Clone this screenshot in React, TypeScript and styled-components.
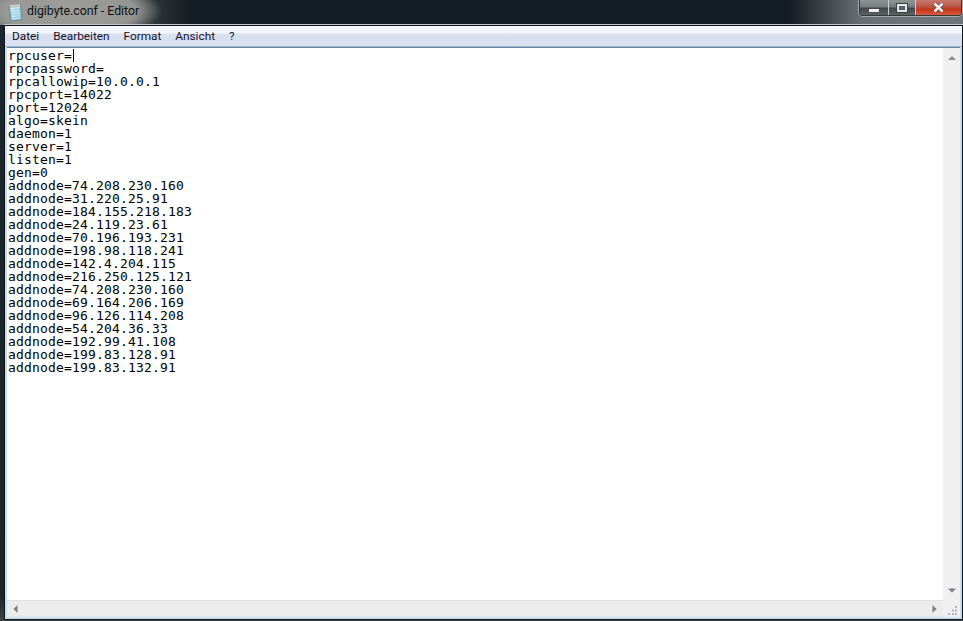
import React from "react";
import styled, { createGlobalStyle } from "styled-components";

const Global = createGlobalStyle`
  html, body { margin: 0; padding: 0; width: 963px; height: 621px; overflow: hidden; background: #1b252b; }
  #root { width: 963px; height: 621px; }
`;

const Frame = styled.div`
  width: 963px;
  height: 621px;
  display: flex;
  flex-direction: column;
  background: linear-gradient(180deg, #1b252b 0, #1c262c 96%, #3c4347 100%);
`;

const TitleBar = styled.div`
  height: 25px;
  flex: none;
  display: flex;
  align-items: flex-start;
  padding: 0 1px 0 8px;
  background:
    radial-gradient(ellipse 92px 30px at 70px 11px, rgba(160,160,156,.95) 0, rgba(156,156,152,.9) 72%, rgba(140,140,140,0) 100%),
    linear-gradient(90deg, rgba(130,134,136,0) 0, rgba(130,134,136,0) 790px, rgba(116,122,124,.9) 862px, #70767a 963px),
    linear-gradient(90deg, #6d7577 0, #667072 100px, #2c353a 155px, #151d24 190px, #141c23 963px);
`;

const DocIcon = styled.svg`
  width: 15px;
  height: 18px;
  margin: 4px 0 0 0;
  flex: none;
`;

const Title = styled.div`
  margin: 3px 0 0 4px;
  font: 12.3px/17px Roboto, "Noto Sans", sans-serif;
  color: #0c1216;
`;

const Controls = styled.div`
  margin-left: auto;
  width: 103px;
  height: 16px;
  display: flex;
  box-sizing: border-box;
  border: 1px solid #34393c;
  border-top: 0;
  border-radius: 0 0 4px 4px;
  overflow: hidden;
  box-shadow: 0 0 0 1px rgba(235,240,242,.45);
`;

const ControlButton = styled.div<{ $w: number; $close?: boolean }>`
  width: ${(p) => p.$w}px;
  flex: none;
  box-sizing: border-box;
  display: flex;
  align-items: center;
  justify-content: center;
  border-right: ${(p) => (p.$close ? "0" : "1px solid #c9cdd0")};
  background: ${(p) =>
    p.$close
      ? "linear-gradient(180deg, #c9786c 0, #b8574a 42%, #c4341a 62%, #d65a3c 100%)"
      : "linear-gradient(180deg, #8f9395 0, #777c7e 45%, #43474a 55%, #5e6366 100%)"};
`;

const MinGlyph = styled.div`
  width: 10px;
  height: 3px;
  margin-top: 6px;
  background: #f1f3f3;
  box-shadow: 0 0 1px #30363a;
`;

const MaxGlyph = styled.div`
  width: 6px;
  height: 4px;
  border: 2px solid #e4e7e9;
  background: #59606a;
  outline: 1px solid #3a4044;
`;

const CloseGlyph = styled.svg`
  width: 13px;
  height: 11px;
`;

const Body = styled.div`
  flex: 1;
  min-height: 0;
  display: flex;
  padding: 0 0 1px 4px;
`;

const Window = styled.div`
  flex: 1;
  min-width: 0;
  display: flex;
  flex-direction: column;
  border: 1px solid #0e161c;
  box-shadow: 0 -1px 0 #c4c8ca;
  background: #c8deee;
  padding: 0 2px 2px;
`;

const MenuBar = styled.div`
  height: 21px;
  flex: none;
  box-sizing: border-box;
  display: flex;
  align-items: center;
  margin: 0 -2px;
  background: linear-gradient(180deg, #f6f8fd 0, #f2f4fb 36%, #d9e0f0 40%, #d9dff0 100%);
  border-bottom: 1px solid #a8b6c7;
`;

const MenuItem = styled.div`
  padding: 0 7px;
  font: 11.8px/18px Roboto, "Noto Sans", sans-serif;
  color: #14102a;
`;

const Editor = styled.div`
  flex: 1;
  min-height: 0;
  display: grid;
  grid-template-columns: 1fr 17px;
  grid-template-rows: 1fr 17px;
  border-top: 1px solid #5d8aa8;
  background: #fff;
`;

const TextArea = styled.div`
  padding: 1px 0 0 1px;
  overflow: hidden;
`;

const Line = styled.div`
  font-family: "DejaVu Sans Mono", "Liberation Mono", monospace;
  font-size: 13px;
  letter-spacing: 0.17px;
  line-height: 13px;
  height: 13px;
  white-space: pre;
  color: #000;
`;

const Caret = styled.span`
  display: inline-block;
  width: 1px;
  height: 13px;
  margin-left: 1px;
  vertical-align: top;
  background: #000;
`;

const VScroll = styled.div`
  background: #f0f0f0;
  display: flex;
  flex-direction: column;
  justify-content: space-between;
  align-items: center;
  padding: 7px 0 6px;
  box-sizing: border-box;
`;

const HScroll = styled.div`
  background: #ececec;
  border-top: 1px solid #e2e2e2;
  display: flex;
  justify-content: space-between;
  align-items: center;
  padding: 0 5px;
  box-sizing: border-box;
`;

const Corner = styled.div`
  background: #f0f0f0;
  display: flex;
  align-items: flex-end;
  justify-content: flex-end;
  padding: 0 3px 2px 0;
`;

const Arrow = styled.svg`
  width: 8px;
  height: 8px;
  display: block;
`;

const lines = [
  "rpcpassword=",
  "rpcallowip=10.0.0.1",
  "rpcport=14022",
  "port=12024",
  "algo=skein",
  "daemon=1",
  "server=1",
  "listen=1",
  "gen=0",
  "addnode=74.208.230.160",
  "addnode=31.220.25.91",
  "addnode=184.155.218.183",
  "addnode=24.119.23.61",
  "addnode=70.196.193.231",
  "addnode=198.98.118.241",
  "addnode=142.4.204.115",
  "addnode=216.250.125.121",
  "addnode=74.208.230.160",
  "addnode=69.164.206.169",
  "addnode=96.126.114.208",
  "addnode=54.204.36.33",
  "addnode=192.99.41.108",
  "addnode=199.83.128.91",
  "addnode=199.83.132.91",
];

const menus = ["Datei", "Bearbeiten", "Format", "Ansicht", "?"];

export default function App() {
  return (
    <>
      <Global />
      <Frame>
        <TitleBar>
          <DocIcon viewBox="0 0 15 18">
            <defs>
              <linearGradient id="pad" x1="0" y1="0" x2="1" y2="1">
                <stop offset="0" stopColor="#bfe8f0" />
                <stop offset="1" stopColor="#7fc0d4" />
              </linearGradient>
            </defs>
            <path d="M1.5 3.5L12.5 2.5L14 15.5L3 17z" fill="url(#pad)" stroke="#55808f" strokeWidth="0.8" />
            <path d="M3.5 7.500l8.600-.8M3.700 10l8.600-.8M4 12.500l8.600-.8M4.200 15l8.600-.8" stroke="#d9f1f6" strokeWidth="0.8" />
            <path d="M3 1v4M5 .8v4M7 .6v4M9 .4v4M11 .2v4" stroke="#f4f6f6" strokeWidth="1.1" />
          </DocIcon>
          <Title>digibyte.conf - Editor</Title>
          <Controls>
            <ControlButton $w={29}><MinGlyph /></ControlButton>
            <ControlButton $w={27}><MaxGlyph /></ControlButton>
            <ControlButton $w={45} $close>
              <CloseGlyph viewBox="0 0 13 11">
                <path d="M2.500 1.500l8 8M10.500 1.500l-8 8" stroke="#4c3a38" strokeWidth="3.8" />
                <path d="M2.500 1.500l8 8M10.500 1.500l-8 8" stroke="#f6f3f2" strokeWidth="2.6" />
              </CloseGlyph>
            </ControlButton>
          </Controls>
        </TitleBar>
        <Body>
          <Window>
            <MenuBar>
              {menus.map((m) => (
                <MenuItem key={m}>{m}</MenuItem>
              ))}
            </MenuBar>
            <Editor>
              <TextArea>
                <Line>rpcuser=<Caret /></Line>
                {lines.map((l, i) => (
                  <Line key={i}>{l}</Line>
                ))}
              </TextArea>
              <VScroll>
                <Arrow viewBox="0 0 8 8"><path d="M4 1L8 5H0z" fill="#8a8f94" /></Arrow>
                <Arrow viewBox="0 0 8 8"><path d="M4 6.500L0 2.500h8z" fill="#7a7f84" /></Arrow>
              </VScroll>
              <HScroll>
                <Arrow viewBox="0 0 8 8"><path d="M1.500 4L5.500 0v8z" fill="#7a7f84" /></Arrow>
                <Arrow viewBox="0 0 8 8"><path d="M6.500 4L2.500 0v8z" fill="#7a7f84" /></Arrow>
              </HScroll>
              <Corner>
                <svg width="9" height="9" viewBox="0 0 9 9">
                  <path d="M7 0h2v2H7zM4 3.500h2v2H4zM7 3.500h2v2H7zM0 7h2v2H0zM4 7h2v2H4zM7 7h2v2H7z" fill="#b0b4b8" />
                </svg>
              </Corner>
            </Editor>
          </Window>
        </Body>
      </Frame>
    </>
  );
}
